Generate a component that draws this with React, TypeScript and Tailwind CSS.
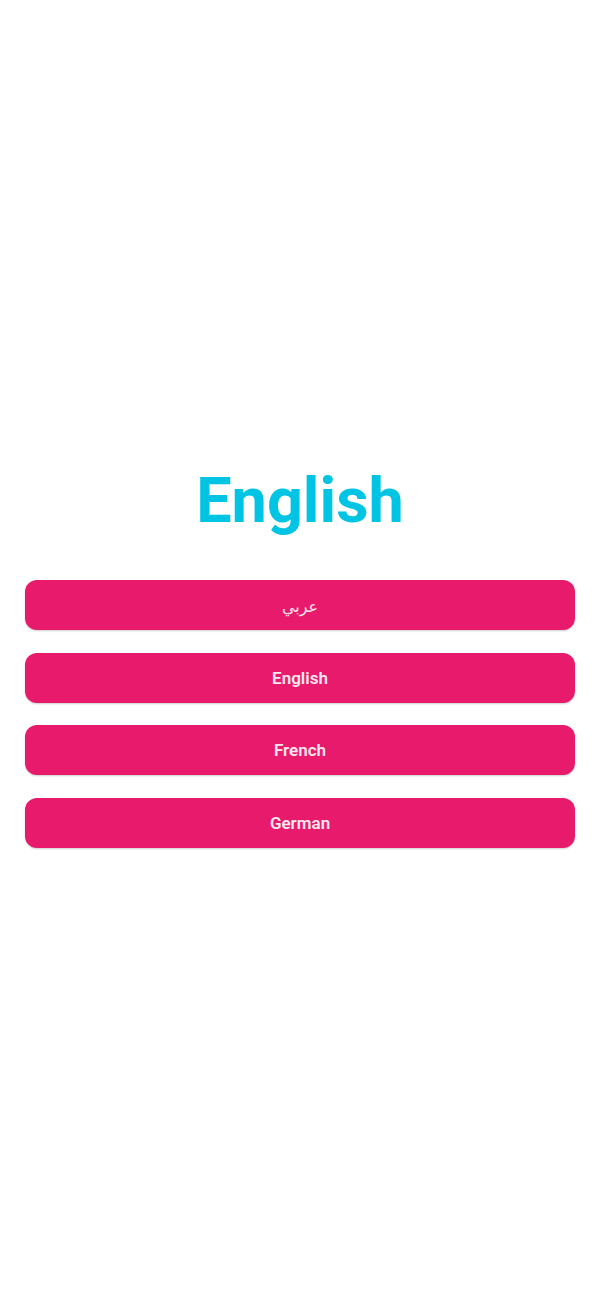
const LANGS = ["عربي", "English", "French", "German"];

export default function App() {
  return (
    <div className="min-h-[1300px] w-full bg-white pt-[462px] font-['Roboto','Noto_Sans',sans-serif]">
      <h1 className="text-center text-[63px] font-bold leading-[77px] text-[#00c4e3]">English</h1>
      <div className="mt-[41px] flex flex-col gap-[22.5px] px-[25px]">
        {LANGS.map((lang) => (
          <button
            key={lang}
            type="button"
            className="flex h-[50px] w-full items-center justify-center rounded-[12px] bg-[#e81a6b] pt-[2px] text-[17px] font-semibold text-[#fde8f0] shadow-[0_1px_2px_rgba(0,0,0,0.2)]"
          >
            {lang === "عربي" ? (
              <span className="font-['Noto_Sans','DejaVu_Sans',sans-serif] text-[16px] font-normal">{lang}</span>
            ) : (
              lang
            )}
          </button>
        ))}
      </div>
    </div>
  );
}
